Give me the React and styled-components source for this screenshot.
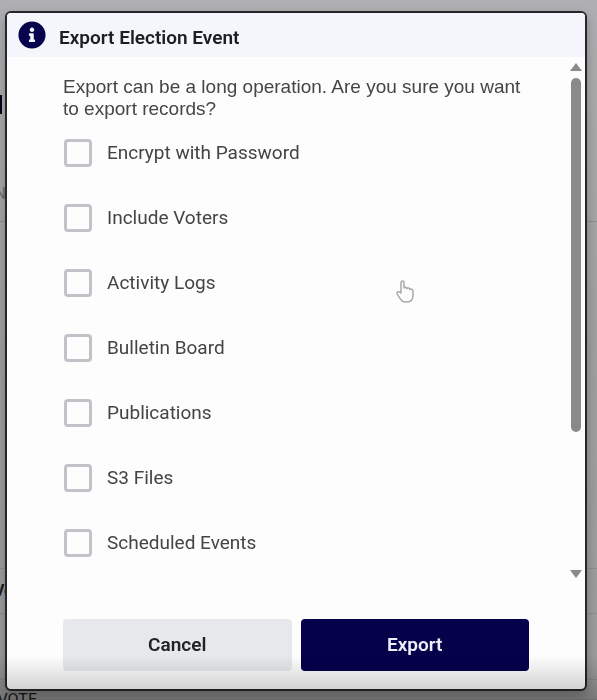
import React, { useState } from "react";
import styled, { createGlobalStyle } from "styled-components";
import { FaInfoCircle } from "react-icons/fa";

const GlobalStyle = createGlobalStyle`
  * {
    box-sizing: border-box;
  }

  body {
    margin: 0;
    overflow: hidden;
    background-color: #a3a3a4;
    font-family: Roboto, "Liberation Sans", sans-serif;
  }
`;

const Page = styled.div`
  display: flex;
  flex-direction: column;
  height: 100vh;
  overflow: hidden;
  background: linear-gradient(#afafb1, #a0a0a0 50%, #9b9b9b);
  color: #2a2a2a;
`;

const PageHeading = styled.div`
  height: 148px;
  padding-top: 95px;

  &::before {
    content: "";
    display: block;
    width: 2px;
    height: 19px;
    background-color: #05051a;
  }
`;

const PageRow = styled.div`
  flex: ${({ $grow }) => ($grow ? "1" : "none")};
  height: ${({ $height }) => $height || "auto"};
  display: flex;
  align-items: ${({ $top }) => ($top ? "flex-start" : "center")};
  padding-top: ${({ $top }) => $top || "0"};
  border-bottom: 1px solid #8f8f8f;
  font-size: 16px;
  line-height: 20px;
  font-weight: ${({ $bold }) => ($bold ? 700 : 400)};
  color: ${({ $muted }) => ($muted ? "#6c6c6c" : "#1c1c1c")};
`;

const Clipped = styled.span`
  display: flex;
  justify-content: flex-end;
  width: ${({ $width }) => $width};
`;

const Overlay = styled.div`
  position: fixed;
  inset: 0;
  display: flex;
  padding: 11px 10px 9px 5px;
`;

const Dialog = styled.div`
  position: relative;
  flex: 1;
  min-width: 0;
  display: flex;
  flex-direction: column;
  border: 2px solid #25262b;
  border-radius: 6px;
  background-color: #fdfdfd;
  box-shadow: 0 6px 12px rgba(0, 0, 0, 0.25);
  overflow: hidden;
`;

const DialogHeader = styled.header`
  display: flex;
  align-items: center;
  gap: 13px;
  height: 44px;
  padding: 0 11px;
  background-color: #f5f6fb;
`;

const InfoIcon = styled(FaInfoCircle)`
  flex: none;
  width: 28px;
  height: 28px;
  color: #07034d;
`;

const Title = styled.h2`
  margin: 0;
  padding-top: 5px;
  font-size: 19px;
  line-height: 24px;
  font-weight: 600;
  color: #1d1e22;
`;

const DialogBody = styled.div`
  flex: 1;
  min-height: 0;
  display: flex;
`;

const Content = styled.div`
  flex: 1;
  min-width: 0;
  padding: 19px 40px 0 56px;
  overflow: hidden;
`;

const Message = styled.p`
  margin: 0 0 19px;
  font-family: "Liberation Sans", Arial, sans-serif;
  font-size: 19px;
  line-height: 22px;
  color: #454545;
`;

const Options = styled.div`
  display: flex;
  flex-direction: column;
  gap: 37px;
`;

const Option = styled.label`
  display: flex;
  align-items: center;
  gap: 15px;
  height: 28px;
  padding-left: 1px;
  font-size: 19px;
  line-height: 28px;
  color: #444446;
  cursor: pointer;
`;

const Checkbox = styled.input`
  appearance: none;
  flex: none;
  width: 28px;
  height: 28px;
  margin: 0;
  border: 3px solid #c2c3c9;
  border-radius: 4px;
  background-color: #fdfdfd;

  &:checked {
    border-color: #07034d;
    background-color: #07034d;
  }
`;

const ScrollRail = styled.div`
  display: flex;
  flex-direction: column;
  align-items: center;
  gap: 7px;
  width: 16px;
  margin-right: 1px;
  padding: 6px 0 5px;
`;

const ScrollArrow = styled.span`
  border-left: 6px solid transparent;
  border-right: 6px solid transparent;
  border-bottom: ${({ $down }) => ($down ? "none" : "8px solid #8a8a8a")};
  border-top: ${({ $down }) => ($down ? "8px solid #8a8a8a" : "none")};
`;

const ScrollTrack = styled.div`
  flex: 1;
  width: 10px;
`;

const ScrollThumb = styled.div`
  width: 10px;
  height: 73%;
  border-radius: 5px;
  background-color: #8a8a8a;
`;

const DialogFooter = styled.footer`
  display: flex;
  gap: 9px;
  padding: 36px 56px 18px;
`;

const Button = styled.button`
  flex: 1;
  height: 52px;
  padding: 0 0 2px;
  border: none;
  border-radius: 4px;
  font-family: inherit;
  font-size: 19px;
  font-weight: 600;
  cursor: pointer;
  background-color: ${({ $primary }) => ($primary ? "#05014a" : "#e6e8ec")};
  color: ${({ $primary }) => ($primary ? "#eeeefb" : "#222327")};
`;

const Cursor = styled.svg`
  position: absolute;
  top: 267px;
  left: 389px;
  width: 18px;
  height: 23px;
  pointer-events: none;
`;

const BottomShade = styled.div`
  position: fixed;
  left: 0;
  right: 0;
  bottom: 0;
  height: 44px;
  background: linear-gradient(transparent, rgba(0, 0, 0, 0.22));
  pointer-events: none;
`;

const exportOptions = [
  "Encrypt with Password",
  "Include Voters",
  "Activity Logs",
  "Bulletin Board",
  "Publications",
  "S3 Files",
  "Scheduled Events",
];

const App = () => {
  const [selected, setSelected] = useState([]);

  const toggle = (name) => {
    setSelected((prev) =>
      prev.includes(name) ? prev.filter((n) => n !== name) : [...prev, name]
    );
  };

  return (
    <>
      <GlobalStyle />
      <Page aria-hidden="true">
        <PageHeading />
        <PageRow $height="74px" $top="36px" $muted>
          <Clipped $width="6px">N</Clipped>
        </PageRow>
        <PageRow $grow />
        <PageRow $height="45px" $bold>
          <Clipped $width="13px">Vo</Clipped>
        </PageRow>
        <PageRow $height="66px" />
        <PageRow $height="20px" $top="10px">
          <Clipped $width="37px">VOTE</Clipped>
        </PageRow>
      </Page>
      <Overlay>
        <Dialog role="dialog" aria-labelledby="dialog-title">
          <DialogHeader>
            <InfoIcon />
            <Title id="dialog-title">Export Election Event</Title>
          </DialogHeader>
          <DialogBody>
            <Content>
              <Message>
                Export can be a long operation. Are you sure you want to export
                records?
              </Message>
              <Options>
                {exportOptions.map((name) => (
                  <Option key={name}>
                    <Checkbox
                      type="checkbox"
                      checked={selected.includes(name)}
                      onChange={() => toggle(name)}
                    />
                    {name}
                  </Option>
                ))}
              </Options>
            </Content>
            <ScrollRail>
              <ScrollArrow />
              <ScrollTrack>
                <ScrollThumb />
              </ScrollTrack>
              <ScrollArrow $down />
            </ScrollRail>
          </DialogBody>
          <DialogFooter>
            <Button type="button">Cancel</Button>
            <Button type="button" $primary>
              Export
            </Button>
          </DialogFooter>
          <Cursor viewBox="0 0 18 23" fill="#fdfdfd" stroke="#a8a8a8" strokeWidth="1.5" strokeLinejoin="round">
            <path d="M5 13V2.6C5 .6 8 .6 8 2.6V8C8.400 6.800 10.700 7 10.900 8.600C11.500 7.600 13.700 7.900 13.800 9.500C14.600 8.700 16.900 9.100 17 11V15C17 19 15 22 11 22H9.500C7 22 5.600 21 4.300 18.900L1.300 14.300C.3 12.400 2.300 11.100 3.700 12.300Z" />
          </Cursor>
        </Dialog>
      </Overlay>
      <BottomShade />
    </>
  );
};

export default App;
